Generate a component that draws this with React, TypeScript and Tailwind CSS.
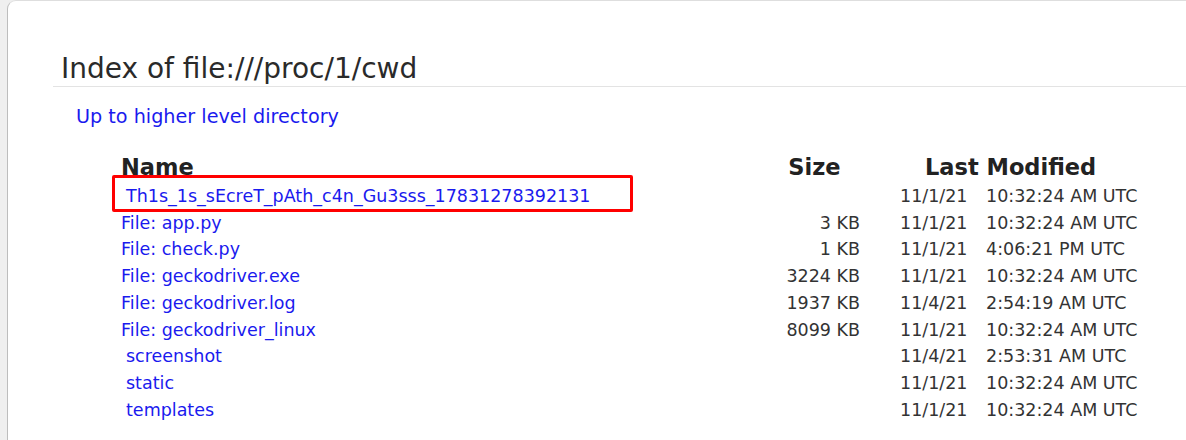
const entries = [
    { name: "Th1s_1s_sEcreT_pAth_c4n_Gu3sss_17831278392131", size: "", date: "11/1/21", time: "10:32:24 AM UTC", dir: true, marked: true },
    { name: "File: app.py", size: "3 KB", date: "11/1/21", time: "10:32:24 AM UTC", dir: false },
    { name: "File: check.py", size: "1 KB", date: "11/1/21", time: "4:06:21 PM UTC", dir: false },
    { name: "File: geckodriver.exe", size: "3224 KB", date: "11/1/21", time: "10:32:24 AM UTC", dir: false },
    { name: "File: geckodriver.log", size: "1937 KB", date: "11/4/21", time: "2:54:19 AM UTC", dir: false },
    { name: "File: geckodriver_linux", size: "8099 KB", date: "11/1/21", time: "10:32:24 AM UTC", dir: false },
    { name: "screenshot", size: "", date: "11/4/21", time: "2:53:31 AM UTC", dir: true },
    { name: "static", size: "", date: "11/1/21", time: "10:32:24 AM UTC", dir: true },
    { name: "templates", size: "", date: "11/1/21", time: "10:32:24 AM UTC", dir: true },
]

function App() {
    return <div className="h-[440px] overflow-hidden bg-[#efefef] pl-[7px] flex" style={{ fontFamily: '"DejaVu Sans", Verdana, sans-serif' }}>
        <div className="flex-1 bg-white border-l border-t border-l-[#bdbdbd] border-t-[#dedede] rounded-tl-[9px] pt-[51px] pl-[45px]">
            <h1 className="text-[28px] leading-[34px] text-[#2a2a2a] pl-[8px] border-b border-[#e3e3e3]">Index of file:///proc/1/cwd</h1>

            <a className="block mt-[18px] ml-[23px] text-[19.2px] leading-[24px] text-[#1a1aee] w-fit">Up to higher level directory</a>

            <div className="ml-[68px] mt-[23px] text-[#333]">
                <div className="grid grid-cols-[648px_91px_40px_86px_1fr] text-[22.5px] leading-[30px] font-bold text-[#222]">
                    <span>Name</span>
                    <span className="text-center">Size</span>
                    <span />
                    <span className="col-span-2 pl-[25px]">Last Modified</span>
                </div>
                <div className="mt-[1px]">
                    {entries.map((e, i) => (
                        <div key={i} className="grid grid-cols-[648px_91px_40px_86px_1fr] text-[17.5px] leading-[26.7px]">
                            <div className="relative">
                                <a className={`text-[#1a1aee] ${e.dir ? "pl-[5px]" : ""}`}>{e.name}</a>
                                {e.marked && <span className="absolute left-[-9px] top-[-8px] w-[521px] h-[37px] border-[3px] border-[#ff0000] rounded-[2px] pointer-events-none" />}
                            </div>
                            <span className="text-right">{e.size}</span>
                            <span />
                            <span>{e.date}</span>
                            <span>{e.time}</span>
                        </div>
                    ))}
                </div>
            </div>
        </div>
    </div>
}

export default App
